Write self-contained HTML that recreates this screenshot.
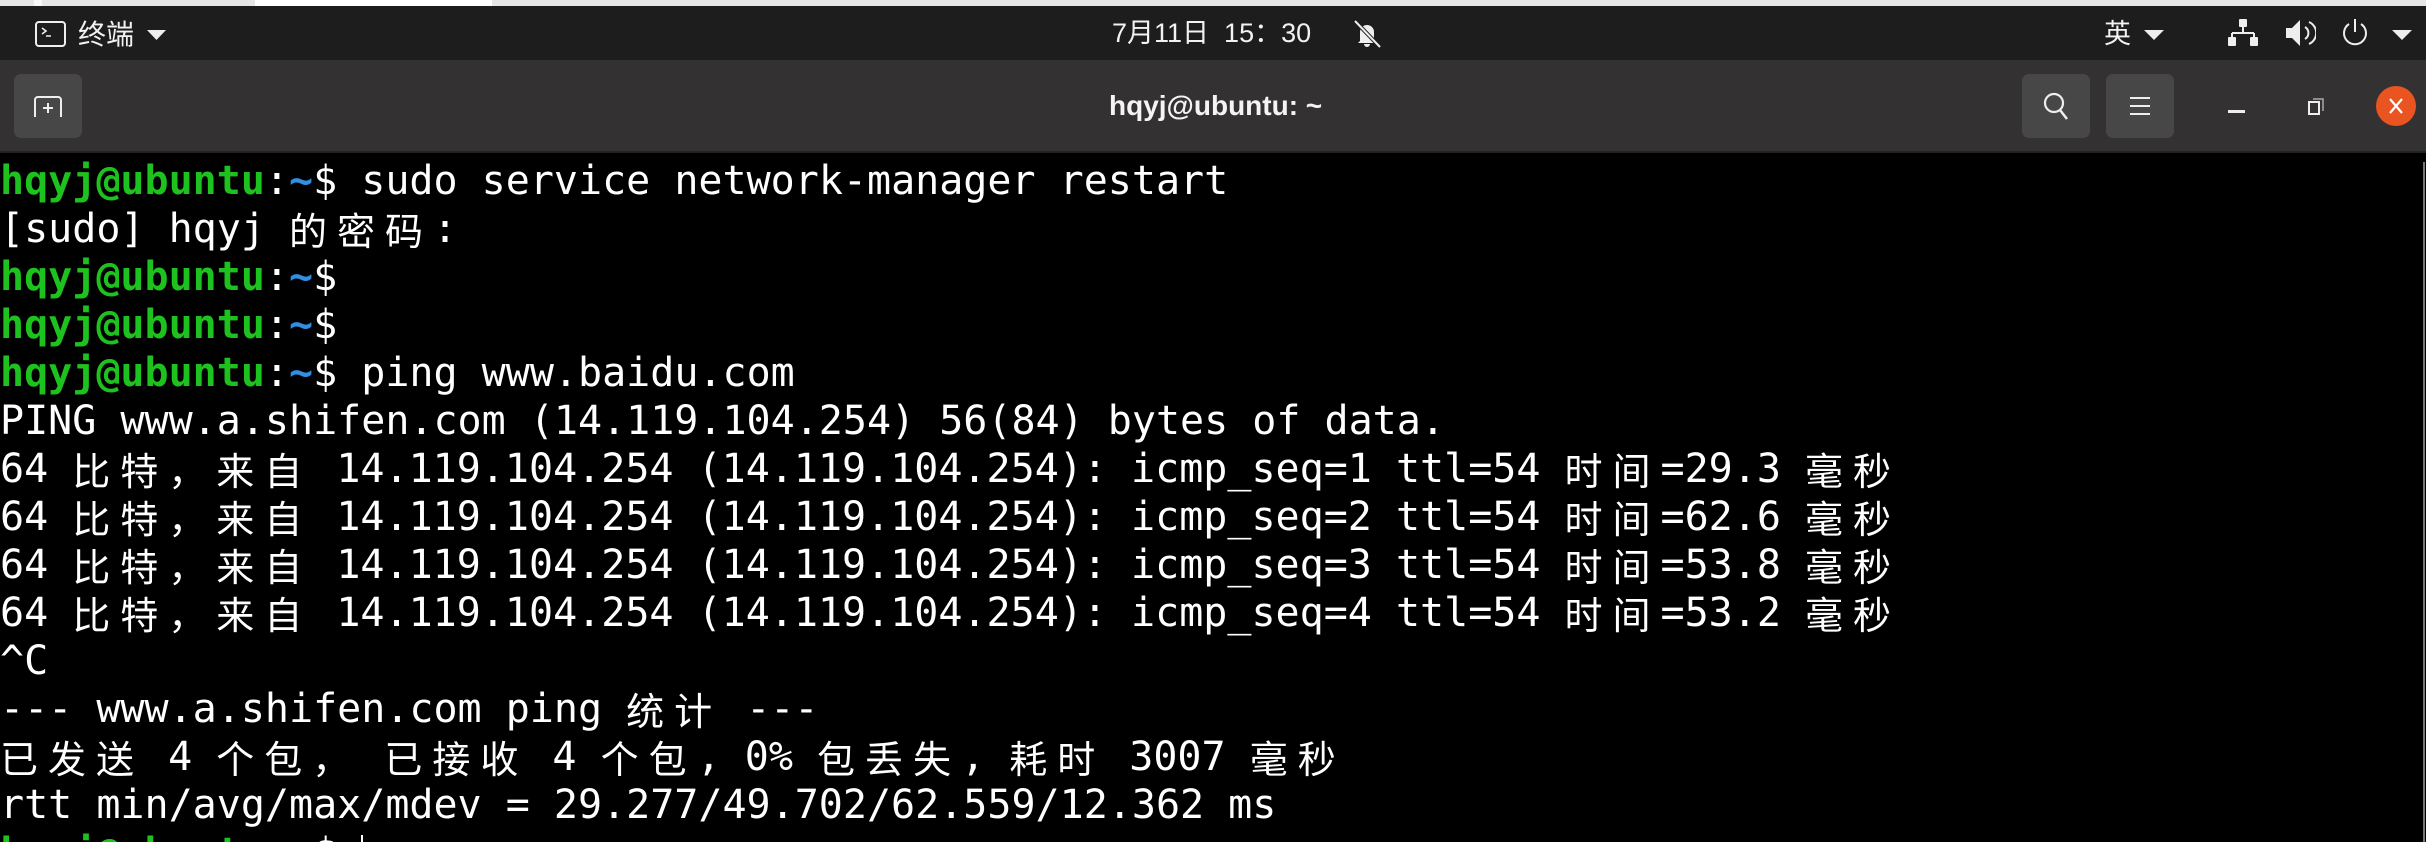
<!DOCTYPE html>
<html style="width:2426px;height:842px;overflow:hidden"><head><meta charset="utf-8"><style>
*{margin:0;padding:0;box-sizing:border-box}
body{width:2426px;height:842px;overflow:hidden;background:#000;position:relative;font-family:"Liberation Sans","Noto Sans CJK SC",sans-serif}
.strip{position:absolute;left:0;top:0;width:2426px;height:6px;background:#e6e6e8}
.top{position:absolute;left:0;top:6px;width:2426px;height:54px;background:#1d1d1d;color:#f2f2f2}
.title{position:absolute;left:0;top:60px;width:2426px;height:93px;background:#333132;border-bottom:2px solid #222}
.btn{position:absolute;top:14px;width:68px;height:64px;background:#484747;border-radius:7px}
.term{position:absolute;left:0;top:157px;width:2426px;height:685px;overflow:hidden;font-family:"DejaVu Sans Mono","Liberation Mono","Noto Sans CJK SC",monospace;font-size:40px;color:#fff}
.l{height:48px;line-height:48px;white-space:pre;overflow:hidden}
.g{color:#1ec21e;font-weight:bold}
.b{color:#2f8fe0;font-weight:bold}
.c{display:inline-block;width:48px;height:48px;vertical-align:top;text-align:left;font-family:"Noto Sans CJK SC",sans-serif;font-size:38px;line-height:48px}
</style></head><body>
<div class="strip"><div style="position:absolute;left:34px;top:0;width:8px;height:6px;background:#f8f8f8"></div><div style="position:absolute;left:255px;top:0;width:237px;height:6px;background:#fff"></div></div>
<div class="top">
<svg style="position:absolute;left:35px;top:15px" width="31" height="26"><rect x="1" y="1" width="29" height="24" rx="3" fill="none" stroke="#eee" stroke-width="2"/><path d="M7 7l4 3-4 3M11 15h5" stroke="#eee" stroke-width="1.6" fill="none"/></svg>
<div style="position:absolute;left:78px;top:9px;font-size:28px;font-family:'Noto Sans CJK SC',sans-serif;line-height:36px">终端</div>
<svg style="position:absolute;left:147px;top:24px" width="19" height="10"><path d="M0 0h19L9.5 10z" fill="#eee"/></svg>
<div style="position:absolute;left:1112px;top:9px;font-size:27px;font-family:'Liberation Sans','Noto Sans CJK SC',sans-serif;line-height:36px;white-space:pre">7月11日  15：30</div>
<svg style="position:absolute;left:1352px;top:13px" width="30" height="30"><path d="M8 22V13a7 7 0 0 1 14 0v9l2 2H6z M12 25h6a3 3 0 0 1-6 0" fill="#eee"/><path d="M3 2l25 26" stroke="#1d1d1d" stroke-width="4"/><path d="M3 2l25 26" stroke="#eee" stroke-width="2"/></svg>
<div style="position:absolute;left:2104px;top:8px;font-size:27px;font-family:'Noto Sans CJK SC',sans-serif;line-height:36px">英</div>
<svg style="position:absolute;left:2144px;top:24px" width="20" height="10"><path d="M0 0h20L10 10z" fill="#eee"/></svg>
<svg style="position:absolute;left:2228px;top:13px" width="30" height="27"><rect x="11" y="0" width="8" height="8" rx="1" fill="#eee"/><path d="M15 8v6M4 14h22M4 14v4M26 14v4" stroke="#eee" stroke-width="2" fill="none"/><rect x="0" y="18" width="8" height="9" rx="1" fill="#eee"/><rect x="22" y="18" width="8" height="9" rx="1" fill="#eee"/></svg>
<svg style="position:absolute;left:2286px;top:13px" width="30" height="28"><path d="M0 9h6l8-8v26l-8-8H0z" fill="#eee"/><path d="M19 8a7 7 0 0 1 0 12M23 3a12 12 0 0 1 0 22" stroke="#eee" stroke-width="2" fill="none"/></svg>
<svg style="position:absolute;left:2341px;top:12px" width="28" height="30"><path d="M8 6a11 11 0 1 0 12 0" stroke="#eee" stroke-width="2" fill="none"/><path d="M14 1v13" stroke="#eee" stroke-width="2"/></svg>
<svg style="position:absolute;left:2392px;top:24px" width="20" height="10"><path d="M0 0h20L10 10z" fill="#eee"/></svg>
</div>
<div class="title">
<div class="btn" style="left:14px"><svg style="position:absolute;left:20px;top:22px" width="30" height="22"><path d="M1 21V4a3 3 0 0 1 3-3h20a3 3 0 0 1 3 3v17" stroke="#eee" stroke-width="2" fill="none"/><path d="M14 7v10M9 12h10" stroke="#eee" stroke-width="2"/></svg></div>
<div style="position:absolute;left:1109px;top:28px;font-size:28px;font-weight:bold;color:#f4f4f4;line-height:36px">hqyj@ubuntu: ~</div>
<div class="btn" style="left:2022px"><svg style="position:absolute;left:21px;top:18px" width="28" height="30"><circle cx="11" cy="11" r="9" stroke="#eee" stroke-width="2.2" fill="none"/><path d="M17 18l7 9" stroke="#eee" stroke-width="2.5"/></svg></div>
<div class="btn" style="left:2106px"><svg style="position:absolute;left:24px;top:22px" width="20" height="20"><path d="M0 2h20M0 10h20M0 18h20" stroke="#eee" stroke-width="2"/></svg></div>
<div style="position:absolute;left:2228px;top:50px;width:17px;height:3px;background:#eee"></div>
<svg style="position:absolute;left:2308px;top:37px" width="17" height="18"><rect x="1" y="5" width="10" height="12" fill="none" stroke="#eee" stroke-width="2"/><path d="M5 2h10v12" stroke="#aaa" stroke-width="1.5" fill="none"/></svg>
<div style="position:absolute;left:2376px;top:26px;width:40px;height:40px;border-radius:50%;background:#e95420"><svg style="position:absolute;left:13px;top:12px" width="14" height="16"><path d="M1 1l12 14M13 1L1 15" stroke="#fff" stroke-width="2.2"/></svg></div>
</div>
<div style="position:absolute;left:2423px;top:162px;width:2px;height:680px;background:#777"></div>
<div class="term">
<div class="l"><span class="g">hqyj@ubuntu</span>:<span class="b">~</span>$ sudo service network-manager restart</div>
<div class="l">[sudo] hqyj <span class="c">的</span><span class="c">密</span><span class="c">码</span>:</div>
<div class="l"><span class="g">hqyj@ubuntu</span>:<span class="b">~</span>$</div>
<div class="l"><span class="g">hqyj@ubuntu</span>:<span class="b">~</span>$</div>
<div class="l"><span class="g">hqyj@ubuntu</span>:<span class="b">~</span>$ ping www.baidu.com</div>
<div class="l">PING www.a.shifen.com (14.119.104.254) 56(84) bytes of data.</div>
<div class="l">64 <span class="c">比</span><span class="c">特</span><span class="c">，</span><span class="c">来</span><span class="c">自</span> 14.119.104.254 (14.119.104.254): icmp_seq=1 ttl=54 <span class="c">时</span><span class="c">间</span>=29.3 <span class="c">毫</span><span class="c">秒</span></div>
<div class="l">64 <span class="c">比</span><span class="c">特</span><span class="c">，</span><span class="c">来</span><span class="c">自</span> 14.119.104.254 (14.119.104.254): icmp_seq=2 ttl=54 <span class="c">时</span><span class="c">间</span>=62.6 <span class="c">毫</span><span class="c">秒</span></div>
<div class="l">64 <span class="c">比</span><span class="c">特</span><span class="c">，</span><span class="c">来</span><span class="c">自</span> 14.119.104.254 (14.119.104.254): icmp_seq=3 ttl=54 <span class="c">时</span><span class="c">间</span>=53.8 <span class="c">毫</span><span class="c">秒</span></div>
<div class="l">64 <span class="c">比</span><span class="c">特</span><span class="c">，</span><span class="c">来</span><span class="c">自</span> 14.119.104.254 (14.119.104.254): icmp_seq=4 ttl=54 <span class="c">时</span><span class="c">间</span>=53.2 <span class="c">毫</span><span class="c">秒</span></div>
<div class="l">^C</div>
<div class="l">--- www.a.shifen.com ping <span class="c">统</span><span class="c">计</span> ---</div>
<div class="l"><span class="c">已</span><span class="c">发</span><span class="c">送</span> 4 <span class="c">个</span><span class="c">包</span><span class="c">，</span> <span class="c">已</span><span class="c">接</span><span class="c">收</span> 4 <span class="c">个</span><span class="c">包</span>, 0% <span class="c">包</span><span class="c">丢</span><span class="c">失</span>, <span class="c">耗</span><span class="c">时</span> 3007 <span class="c">毫</span><span class="c">秒</span></div>
<div class="l">rtt min/avg/max/mdev = 29.277/49.702/62.559/12.362 ms</div>
<div class="l"><span class="g">hqyj@ubuntu</span>:<span class="b">~</span>$ <span style="display:inline-block;width:2px;height:40px;background:#fff;vertical-align:middle"></span></div>
</div>
</body></html>
